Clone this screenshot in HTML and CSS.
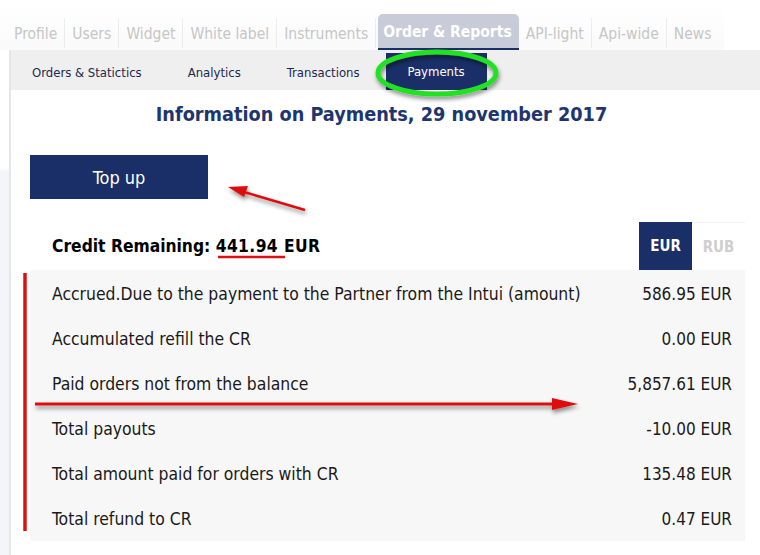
FILE: index.html
```html
<!DOCTYPE html>
<html>
<head>
<meta charset="utf-8">
<link rel="stylesheet" href="styles.css">
</head>
<body>
<div class="page">
  <nav class="topnav">
    <a class="tab">Profile</a>
    <a class="tab">Users</a>
    <a class="tab">Widget</a>
    <a class="tab">White label</a>
    <a class="tab">Instruments</a>
    <a class="tab active">Order &amp; Reports</a>
    <a class="tab">API-light</a>
    <a class="tab">Api-wide</a>
    <a class="tab last">News</a>
  </nav>
  <div class="main">
    <div class="side"></div>
    <div class="panel">
      <nav class="subnav">
        <a class="sub">Orders &amp; Statictics</a>
        <a class="sub">Analytics</a>
        <a class="sub">Transactions</a>
        <a class="sub active">Payments</a>
      </nav>
      <h1 class="title">Information on Payments, 29 november 2017</h1>
      <div class="content">
        <button class="topup">Top up</button>
        <div class="credit-row">
          <div class="credit">Credit Remaining: <span class="amount">441.94 EUR</span></div>
          <div class="currency">
            <span class="cur on">EUR</span>
            <span class="cur">RUB</span>
          </div>
        </div>
        <div class="table">
          <div class="row"><span>Accrued.Due to the payment to the Partner from the Intui (amount)</span><span>586.95 EUR</span></div>
          <div class="row"><span>Accumulated refill the CR</span><span>0.00 EUR</span></div>
          <div class="row"><span>Paid orders not from the balance</span><span>5,857.61 EUR</span></div>
          <div class="row"><span>Total payouts</span><span>-10.00 EUR</span></div>
          <div class="row"><span>Total amount paid for orders with CR</span><span>135.48 EUR</span></div>
          <div class="row"><span>Total refund to CR</span><span>0.47 EUR</span></div>
        </div>
      </div>
    </div>
  </div>
  <svg class="marks" width="760" height="555" viewBox="0 0 760 555">
    <defs>
      <filter id="sh" x="-20%" y="-50%" width="140%" height="200%">
        <feDropShadow dx="1" dy="3" stdDeviation="2" flood-color="#000" flood-opacity="0.45"/>
      </filter>
    </defs>
    <ellipse cx="437" cy="73" rx="59" ry="21" fill="none" stroke="#22e022" stroke-width="5" filter="url(#sh)"/>
    <g filter="url(#sh)" fill="#dd1010" stroke="#dd1010">
      <line x1="305" y1="210" x2="244" y2="192" stroke-width="2.5"/>
      <polygon points="228,187 248,186 244,197" stroke="none"/>
      <line x1="35" y1="404" x2="556" y2="404" stroke-width="3"/>
      <polygon points="578,404 552,398 552,410" stroke="none"/>
    </g>
    <line x1="25" y1="273" x2="25" y2="531" stroke="#dd1010" stroke-width="3.5"/>
    <line x1="218" y1="257" x2="285" y2="257" stroke="#dd1010" stroke-width="2.5"/>
  </svg>
</div>
</body>
</html>
```
FILE: styles.css
```css
* { box-sizing: border-box; }
body {
  margin: 0;
  background: #fff;
  font-family: "DejaVu Sans Condensed", "DejaVu Sans", sans-serif;
  color: #1a1a1a;
}
.page {
  position: relative;
  width: 760px;
  height: 555px;
  overflow: hidden;
}
.topnav {
  display: flex;
  align-items: flex-end;
  height: 50px;
  padding-left: 7px;
  padding-top: 14px;
  width: 724px;
  background: linear-gradient(#fff, #fafafa);
}
.tab {
  display: block;
  height: 30px;
  margin-bottom: 2px;
  padding: 7px 7px 0 7px;
  font-size: 15.5px;
  color: #c6c6c6;
  border-right: 1px solid #ececec;
  white-space: nowrap;
}
.tab.last { border-right: none; }
.tab.active {
  height: 36px;
  margin: 0 0 0 2px;
  background: #c7ccd8;
  color: #fff;
  font-weight: bold;
  border-radius: 5px 5px 0 0;
  border-right: none;
  border-bottom: 2px solid #1b2f66;
  padding: 9px 7px 0 5px;
}
.main {
  display: flex;
  height: 505px;
}
.side {
  width: 9px;
  background: linear-gradient(#fff 0, #fff 118px, #f3f5f9 122px);
}
.panel {
  flex: 1;
  border-left: 2px solid #e6e6e6;
}
.subnav {
  display: flex;
  align-items: flex-end;
  height: 40px;
  background: #efefef;
}
.sub {
  display: block;
  padding: 0 23px 10px 23px;
  font-size: 13px;
  color: #1c2850;
}
.sub:first-child { padding-left: 21px; }
.sub.active {
  width: 101px;
  height: 37px;
  padding: 11px 0 0 0;
  margin-left: 3px;
  text-align: center;
  background: #1a2f68;
  color: #fff;
}
.title {
  margin: 15px 0 0 0;
  text-align: center;
  font-size: 19.7px;
  font-weight: bold;
  color: #1d3570;
  line-height: 20px;
  padding-right: 8px;
}
.content {
  padding: 30px 4px 0 19px;
}
.topup {
  display: block;
  width: 178px;
  height: 44px;
  border: none;
  background: #1a2f68;
  color: #fff;
  font-family: inherit;
  font-size: 18px;
}
.credit-row {
  display: flex;
  justify-content: space-between;
  align-items: center;
  margin-top: 23px;
  width: 715px;
  height: 48px;
}
.credit {
  padding-left: 22px;
  font-size: 17.3px;
  font-weight: bold;
  color: #000;
}
.amount { letter-spacing: 0.4px; }
.currency {
  display: flex;
  height: 48px;
}
.cur {
  width: 53px;
  display: flex;
  align-items: center;
  justify-content: center;
  font-size: 15px;
  font-weight: bold;
  color: #cfcfcf;
  border-top: 1px solid #f2f2f2;
}
.cur.on {
  background: #1a2f68;
  color: #fff;
  border-top: none;
}
.table {
  width: 715px;
  background: #f7f7f7;
  padding-top: 1px;
  height: 271px;
}
.row {
  display: flex;
  justify-content: space-between;
  align-items: center;
  height: 45px;
  padding: 0 13px 0 22px;
  font-size: 17.4px;
  color: #1a1a1a;
}
.row span:last-child { font-size: 17px; }
.marks {
  position: absolute;
  left: 0;
  top: 0;
  pointer-events: none;
}
```
